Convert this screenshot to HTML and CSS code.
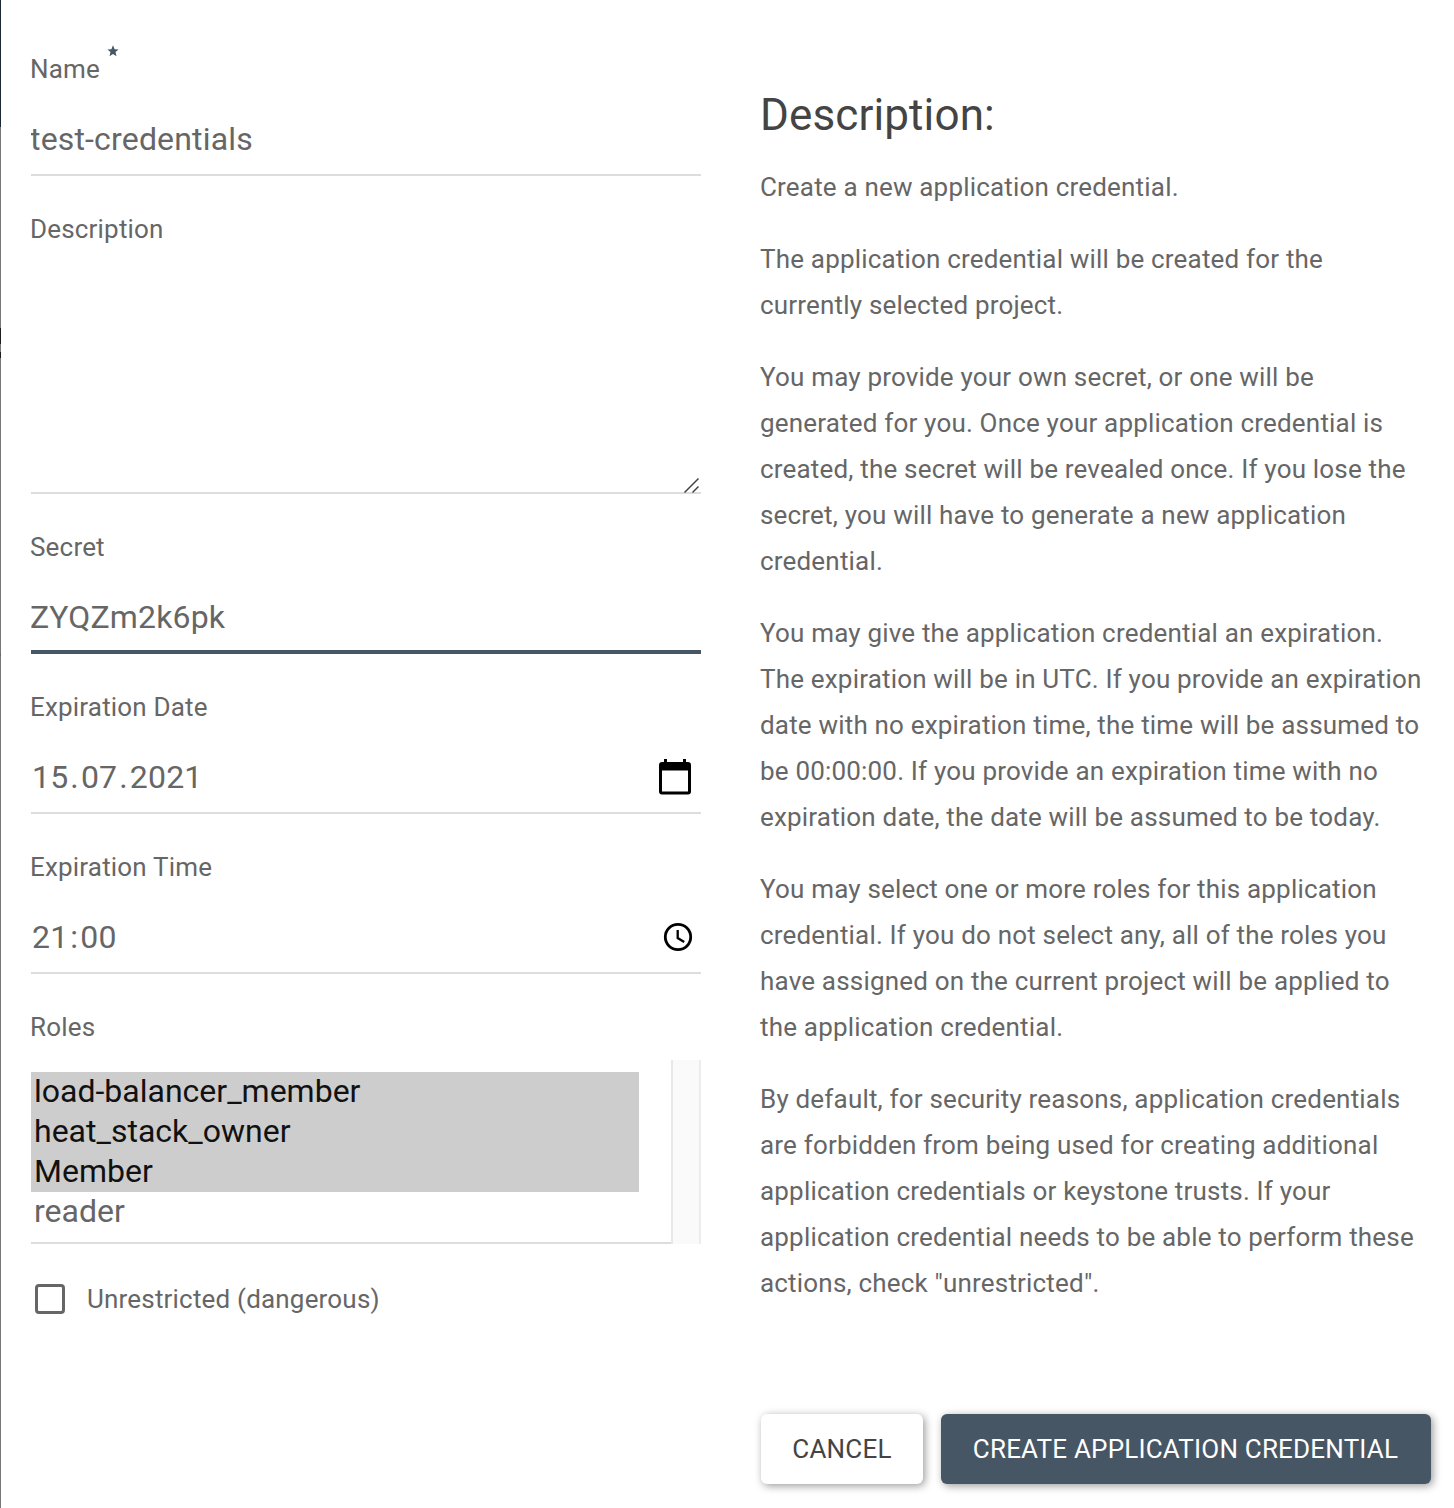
FILE: index.html
```html
<!DOCTYPE html>
<html lang="en">
<head>
<meta charset="utf-8">
<title>Create Application Credential</title>
<link rel="stylesheet" href="styles.css">
</head>
<body>
<div class="backdrop-edge"></div>
<form class="modal">
  <div class="fields">
    <div class="form-group">
      <label class="label" for="name">Name<svg class="required" width="12" height="12" viewBox="0 0 12 12"><path d="M6 .3 7.600 4.200l4 .3-3.100 2.600 1 4.100L6 9l-3.500 2.200 1-4.100L.4 4.500l4-.3z"/></svg></label>
      <input class="control" id="name" type="text" value="test-credentials">
    </div>
    <div class="form-group">
      <label class="label" for="description">Description</label>
      <div class="textarea-wrap">
        <textarea class="control textarea" id="description"></textarea>
        <svg class="grip" width="18" height="18" viewBox="0 0 18 18"><path d="M1.500 16.500 15.500 2.500M9.500 16.500 15.500 10.500"/></svg>
      </div>
    </div>
    <div class="form-group">
      <label class="label" for="secret">Secret</label>
      <input class="control focused" id="secret" type="text" value="ZYQZm2k6pk">
    </div>
    <div class="form-group">
      <label class="label">Expiration Date</label>
      <div class="control picker">
        <div class="value"><span>15</span><span>.</span><span>07</span><span>.</span><span>2021</span></div>
        <svg class="calendar" width="32" height="36" viewBox="0 0 32 36"><path fill-rule="evenodd" d="M5 0h3v3h16V0h3v3h2a3 3 0 0 1 3 3v26.500a3 3 0 0 1-3 3H3a3 3 0 0 1-3-3V6a3 3 0 0 1 3-3h2zM3 11.500v21h26v-21z"/></svg>
      </div>
    </div>
    <div class="form-group">
      <label class="label">Expiration Time</label>
      <div class="control picker">
        <div class="value"><span>21</span><span>:</span><span>00</span></div>
        <svg class="clock" width="30" height="30" viewBox="0 0 30 30"><circle cx="15" cy="15" r="12.700"/><path d="M14.700 8v8l6.500 4" stroke-width="2.300"/></svg>
      </div>
    </div>
    <div class="form-group">
      <label class="label">Roles</label>
      <div class="roles">
        <ul class="options">
          <li class="option selected">load-balancer_member</li>
          <li class="option selected">heat_stack_owner</li>
          <li class="option selected">Member</li>
          <li class="option">reader</li>
        </ul>
        <div class="scrollbar"></div>
      </div>
    </div>
    <label class="check"><span class="box"></span><span class="check-text">Unrestricted (dangerous)</span></label>
  </div>
  <div class="side">
    <div class="help">
      <h3 class="title">Description:</h3>
      <p>Create a new application credential.</p>
      <p>The application credential will be created for the<br>currently selected project.</p>
      <p>You may provide your own secret, or one will be<br>generated for you. Once your application credential is<br>created, the secret will be revealed once. If you lose the<br>secret, you will have to generate a new application<br>credential.</p>
      <p>You may give the application credential an expiration.<br>The expiration will be in UTC. If you provide an expiration<br>date with no expiration time, the time will be assumed to<br>be 00:00:00. If you provide an expiration time with no<br>expiration date, the date will be assumed to be today.</p>
      <p>You may select one or more roles for this application<br>credential. If you do not select any, all of the roles you<br>have assigned on the current project will be applied to<br>the application credential.</p>
      <p>By default, for security reasons, application credentials<br>are forbidden from being used for creating additional<br>application credentials or keystone trusts. If your<br>application credential needs to be able to perform these<br>actions, check "unrestricted".</p>
    </div>
    <div class="actions">
      <button class="btn cancel" type="button">Cancel</button>
      <button class="btn primary" type="button">Create Application Credential</button>
    </div>
  </div>
</form>
</body>
</html>
```
FILE: styles.css
```css
* { box-sizing: border-box; }

body {
  margin: 0;
  display: flex;
  width: 1454px;
  height: 1508px;
  overflow: hidden;
  background: #fff;
  color: #666;
  font-family: Roboto, "Liberation Sans", sans-serif;
  font-size: 26px;
  line-height: 46px;
  letter-spacing: 0.185px;
}

.backdrop-edge {
  width: 1px;
  background: linear-gradient(#1c2733 127px, #777 127px 328px, #1c1c1c 328px 344px, #777 344px 352px, #1c1c1c 352px 358px, #777 358px 653px, #66696d 653px 656px, #777 656px);
}

.modal { display: flex; flex: 1; gap: 59px; padding: 46px 22px 24px 30px; }
.fields { width: 670px; }
.form-group { margin-bottom: 30px; }

.label { display: flex; height: 46px; margin: 0 0 10px -1px; white-space: nowrap; }
.required { margin: -1px 0 0 7px; fill: #465664; }

.control {
  display: block;
  width: 100%;
  height: 74px;
  padding: 0;
  border: 0;
  outline: 0;
  border-radius: 0;
  background: transparent;
  box-shadow: inset 0 -2px 0 #ddd;
  color: #666;
  font: inherit;
  font-size: 32px;
  letter-spacing: 0.17px;
  text-indent: -1px;
}
.control.focused { box-shadow: inset 0 -4px 0 #465664; }
.textarea-wrap { position: relative; }
.textarea { height: 232px; resize: none; }
.grip { position: absolute; right: 0; bottom: 0; fill: none; stroke: #444; stroke-width: 1.5; }

.picker { display: flex; align-items: center; justify-content: space-between; padding: 0 10px 0 1px; text-indent: 0; }
.value { display: flex; gap: 2px; }
.clock { margin-right: -2px; fill: none; stroke: #000; stroke-width: 2.8; }

.roles { display: flex; height: 184px; }
.options { flex: 1; margin: 0; padding: 12px 0 0; list-style: none; box-shadow: inset 0 -2px 0 #ddd; }
.option { width: 608px; height: 40px; padding-left: 3px; font-size: 32px; line-height: 38px; letter-spacing: 0; }
.option.selected { background: #cdcdcd; color: #111; }
.scrollbar { width: 30px; border: solid #e8e8e8; border-width: 0 2px; border-right-color: #ededed; background: #fafafa; }

.check { display: flex; align-items: center; height: 46px; margin-top: 32px; padding-left: 4px; gap: 22px; }
.box { width: 30px; height: 30px; border: 3px solid #666; border-radius: 4px; }

.side { display: flex; flex: 1; flex-direction: column; justify-content: space-between; white-space: nowrap; }
.title { margin: 43px 0 22px; font-size: 44px; font-weight: 400; line-height: 53px; color: #444; letter-spacing: 0.12px; }
.help p { margin: 0 0 26px; }

.actions { display: flex; gap: 18px; margin-left: 1px; }
.btn {
  height: 70px;
  padding: 0;
  border: 0;
  border-radius: 6px;
  box-shadow: 2px 2px 8px rgba(0, 0, 0, 0.4);
  font: inherit;
  letter-spacing: 0.19px;
  text-transform: uppercase;
}
.cancel { width: 162px; background: #fff; color: #444; }
.primary { width: 490px; padding-right: 1px; background: #465664; color: #fff; }
```
